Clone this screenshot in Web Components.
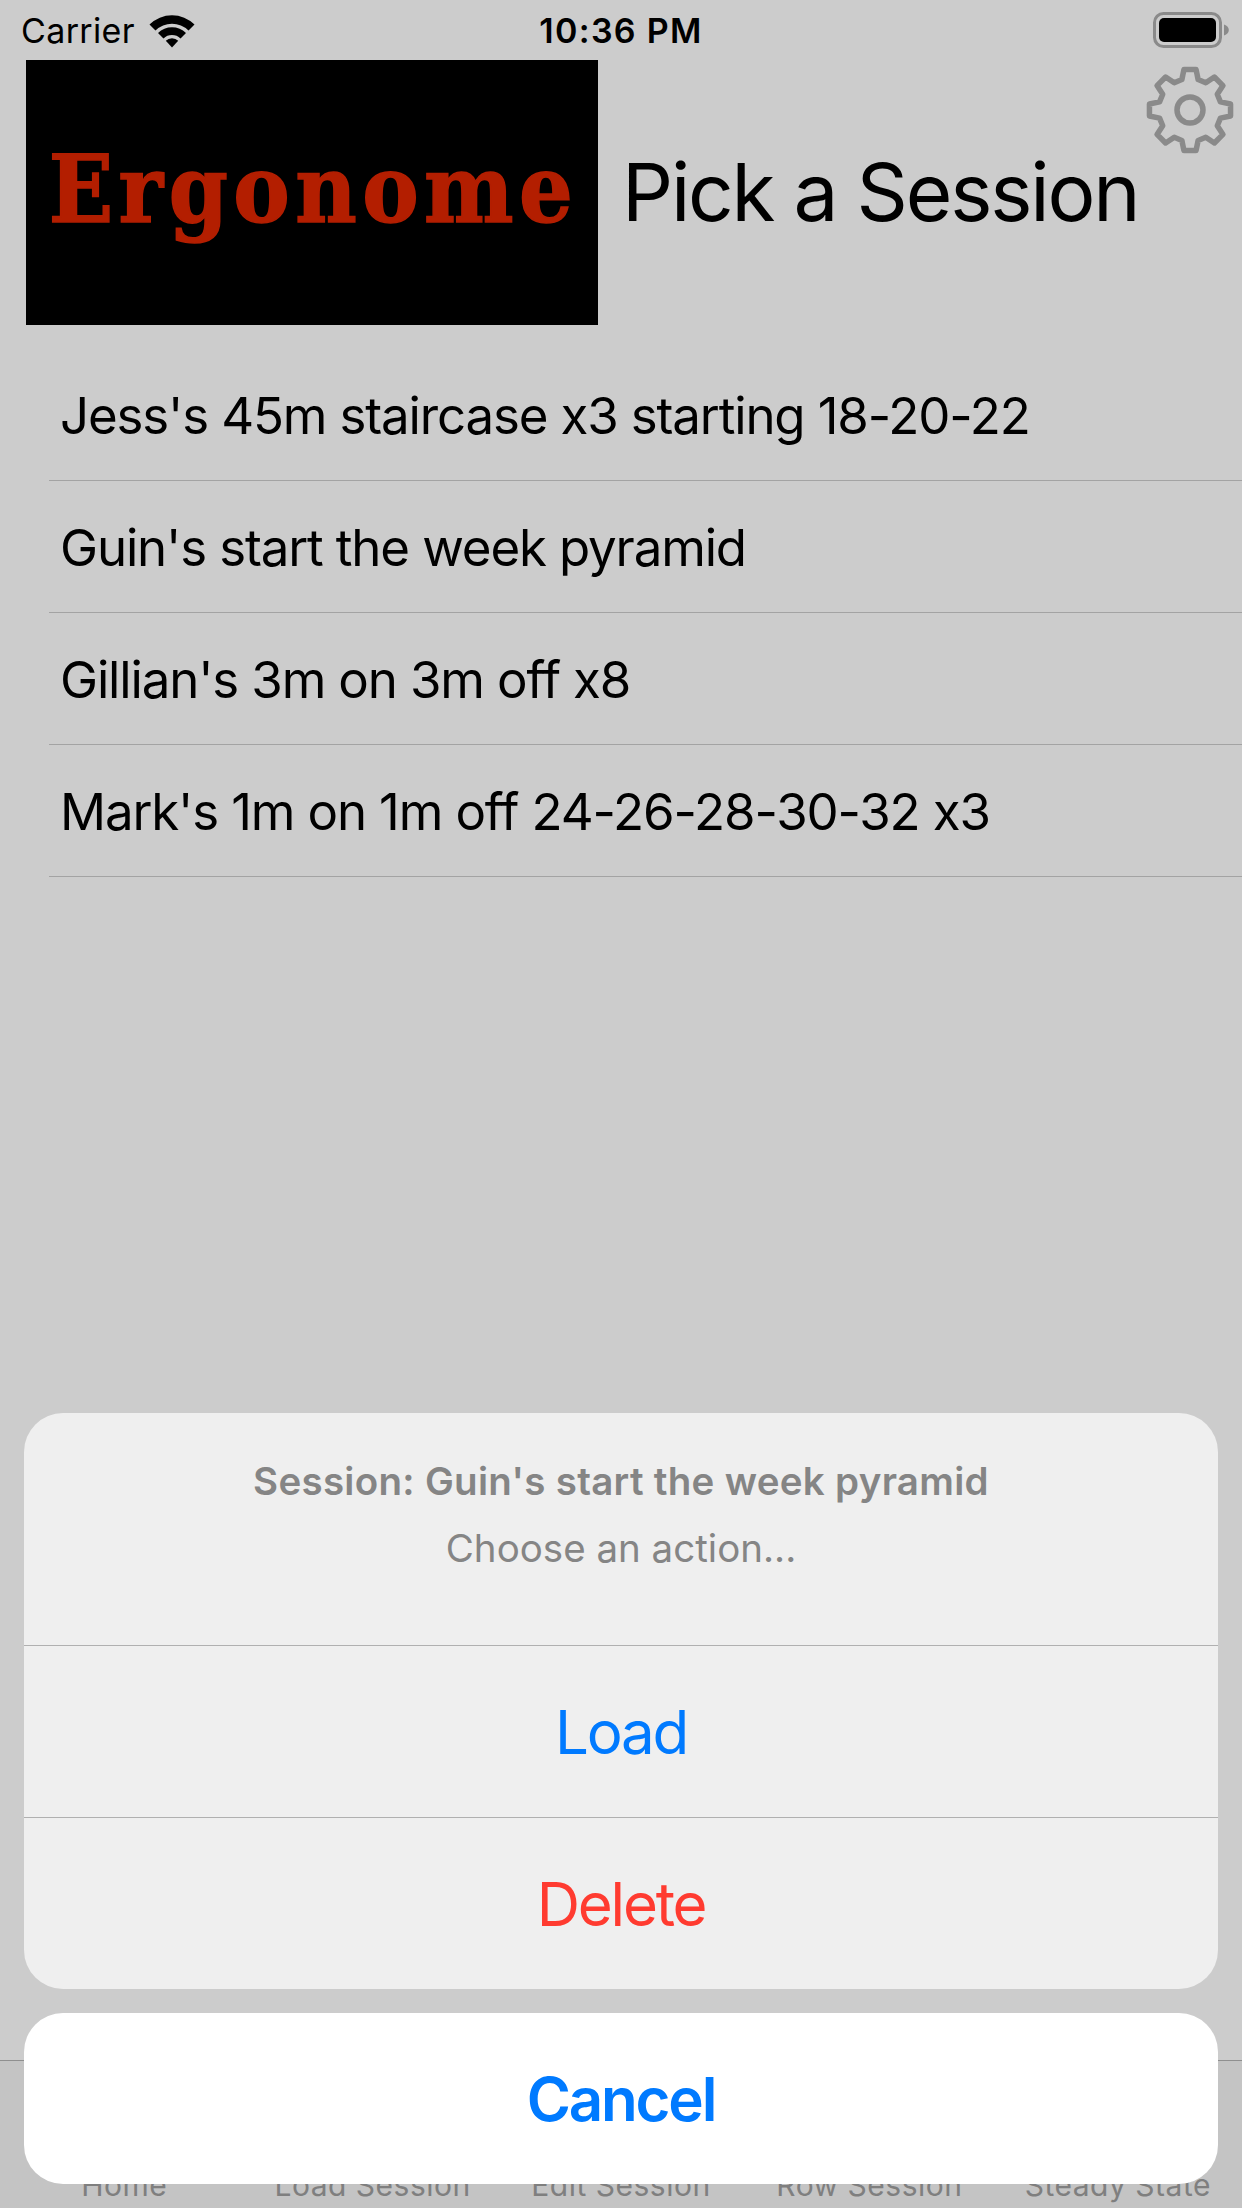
<!DOCTYPE html>
<html><head><meta charset="utf-8">
<style>
html,body{margin:0;padding:0;background:#ccc}
body{font-family:Inter,"Noto Sans",sans-serif}
</style></head>
<body>
<app-screen>
  <status-bar></status-bar>
  <page-header heading="Pick a Session"></page-header>
  <session-list>
    <session-row>Jess's 45m staircase x3 starting 18-20-22</session-row>
    <session-row>Guin's start the week pyramid</session-row>
    <session-row>Gillian's 3m on 3m off x8</session-row>
    <session-row>Mark's 1m on 1m off 24-26-28-30-32 x3</session-row>
  </session-list>
  <tab-bar></tab-bar>
  <action-sheet title-text="Session: Guin's start the week pyramid" message="Choose an action..."></action-sheet>
</app-screen>
<script>
const def=(name,html,init)=>customElements.define(name,class extends HTMLElement{
  connectedCallback(){
    if(this.shadowRoot)return;
    const r=this.attachShadow({mode:'open'});
    r.innerHTML=typeof html==='function'?html(this):html;
  }
});
def('app-screen',`<style>
:host{display:flex;flex-direction:column;position:relative;width:1242px;height:2208px;overflow:hidden;background:#ccc;color:#000}
</style><slot></slot>`);
def('status-bar',`<style>
:host{display:grid;grid-template-columns:1fr auto 1fr;align-items:center;height:60px;font-size:34px;box-sizing:border-box;padding:0 13px 0 21px}
.l{display:flex;align-items:center;gap:14px;letter-spacing:.35px}
.r{display:flex;justify-content:flex-end;align-items:center}
.t{font-weight:600;letter-spacing:1.3px;margin-left:-8px}
svg{display:block}
</style>
<div class="l"><span>Carrier</span>
<svg width="46" height="36" viewBox="0 0 46 36"><path fill="#000" d="M0.5 12.5A32 32 0 0 1 45.500 12.500L39.500 18.500A23.500 23.500 0 0 0 6.500 18.500Z"/><path fill="#000" d="M9 21A20 20 0 0 1 37 21L31.500 26.500A12.200 12.200 0 0 0 14.500 26.500Z"/><path fill="#000" d="M16.800 28.800A8.800 8.800 0 0 1 29.200 28.800L23 35.500Z"/></svg></div>
<div class="t">10:36 PM</div>
<div class="r"><svg width="76" height="36" viewBox="0 0 76 36"><rect x="1.500" y="1.500" width="66" height="33" rx="9" fill="none" stroke="#8a8a8a" stroke-width="3"/><rect x="6" y="6" width="57" height="24" rx="5" fill="#000"/><path d="M71 12.500a8 6 0 0 1 0 11z" fill="#8a8a8a"/></svg></div>`);
function gearPath(){
  const c=50,n=8;
  const P=(r,a)=>{a=a*Math.PI/180;return (c+r*Math.cos(a)).toFixed(2)+' '+(c+r*Math.sin(a)).toFixed(2)};
  let d='';
  for(let i=0;i<n;i++){
    const a=i*45;
    d+=(i?'L':'M')+P(31.5,a-15)+'L'+P(41,a-8.500)+'L'+P(41,a+8.500)+'L'+P(31.5,a+15);
  }
  return d+'Z';
}
def('page-header',h=>`<style>
:host{display:flex;align-items:flex-start;padding-left:26px;height:265px}
.logo{width:572px;height:265px;background:#000;flex:none;display:flex;align-items:center;justify-content:center;box-sizing:border-box;padding:0 0 8px 3px}
.logo span{font-family:"DejaVu Serif Condensed","DejaVu Serif",serif;font-weight:bold;font-stretch:condensed;font-size:94px;line-height:1;color:#b31e00;filter:blur(.6px);letter-spacing:5.5px;white-space:nowrap;-webkit-text-stroke:1.5px #b31e00}
h1{margin:0 0 0 24px;font-weight:400;font-size:80px;line-height:263px;letter-spacing:-2.2px;white-space:nowrap;flex:none;height:263px}
svg{flex:none;position:absolute;right:4px;top:62px}
</style>
<div class="logo"><span>Ergonome</span></div><h1>${h.getAttribute('heading')}</h1>
<svg width="96" height="96" viewBox="0 0 96 96"><g transform="translate(-2 -2)"><path fill="none" stroke="#8a8a8a" stroke-width="5.500" stroke-linejoin="round" d="${gearPath()}"/><circle cx="50" cy="50" r="13" fill="none" stroke="#8a8a8a" stroke-width="5.500"/></g></svg>`);
def('session-list',`<style>:host{display:block;margin-top:24px;flex:none}</style><slot></slot>`);
def('session-row',`<style>
:host{display:flex;align-items:center;height:132px;margin-left:49px;padding:2px 0 0 11px;box-sizing:border-box;border-bottom:1.500px solid #a3a3a3;font-size:51px;letter-spacing:-1.15px;white-space:nowrap}
</style><slot></slot>`);
def('tab-bar',`<style>
:host{display:grid;grid-template-columns:repeat(5,1fr);margin-top:auto;height:148px;box-sizing:border-box;border-top:1.500px solid #8f8f8f;background:#c4c4c4;align-items:end;color:#7f7f7f;font-size:30px;text-align:center;letter-spacing:.5px}
span{display:block;padding-bottom:5px;white-space:nowrap}
</style><span>Home</span><span>Load Session</span><span>Edit Session</span><span>Row Session</span><span>Steady State</span>`);
def('action-sheet',h=>`<style>
:host{position:absolute;left:24px;right:24px;bottom:24px;display:flex;flex-direction:column;gap:24px;text-align:center}
.g{background:#efefef;border-radius:39px;overflow:hidden}
.head{height:233px;box-sizing:border-box;padding-top:45px;color:#858585;border-bottom:1.500px solid #b0b0b0}
.t{font-weight:600;font-size:38.500px;line-height:46px;white-space:nowrap;letter-spacing:.3px}
.m{font-size:38.500px;line-height:46px;margin-top:21px;white-space:nowrap}
.b{height:171px;display:flex;align-items:center;justify-content:center;font-size:60px;letter-spacing:-2.200px}
.load{color:#007aff;border-bottom:1.500px solid #b0b0b0}
.del{color:#ff3b30}
.cancel{background:#fff;color:#007aff;font-weight:600}
</style>
<div class="g"><div class="head"><div class="t">${h.getAttribute('title-text')}</div><div class="m">${h.getAttribute('message')}</div></div>
<div class="b load">Load</div><div class="b del">Delete</div></div>
<div class="g cancel b">Cancel</div>`);
</script>
</body></html>
